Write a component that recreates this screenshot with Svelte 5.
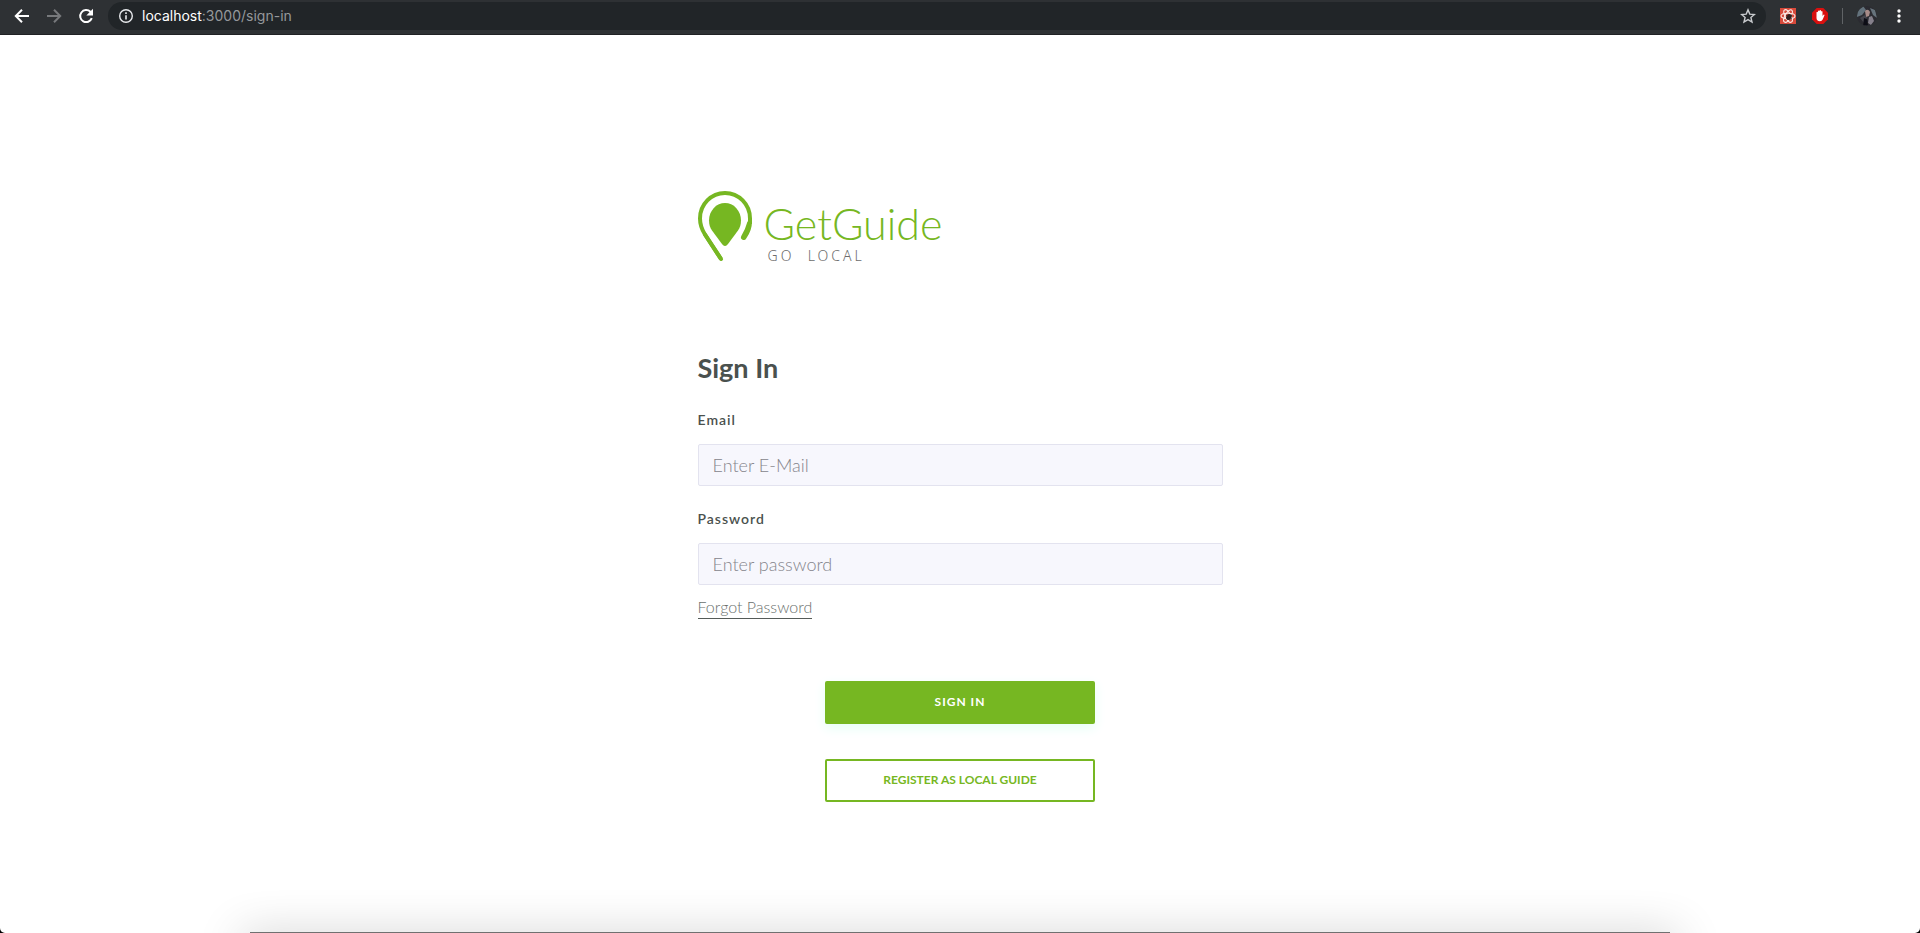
<script>
  let email = $state('');
  let password = $state('');
</script>

<div class="window">
  <header class="toolbar">
    <nav class="nav" aria-label="Browser">
      <button class="tool" aria-label="Back">
        <svg width="20" height="20" viewBox="0 0 20 20"><path d="M17 10H4M10 3.800 3.800 10l6.200 6.200" fill="none" stroke="#fff" stroke-width="2" /></svg>
      </button>
      <button class="tool" aria-label="Forward">
        <svg width="20" height="20" viewBox="0 0 20 20"><path d="M3 10h13M10 3.800l6.200 6.200-6.200 6.200" fill="none" stroke="#77797c" stroke-width="2" /></svg>
      </button>
      <button class="tool" aria-label="Reload">
        <svg width="20" height="20" viewBox="0 0 20 20"><path d="M15.800 12.200A6 6 0 1 1 14.400 5.800l1.200 1.200" fill="none" stroke="#fff" stroke-width="2" /><path d="M17 2.800v6.700h-6.700z" fill="#fff" /></svg>
      </button>
    </nav>
    <div class="address">
      <svg width="16" height="16" viewBox="0 0 16 16"><circle cx="8" cy="8" r="6.300" fill="none" stroke="#e8eaed" stroke-width="1.400" /><path d="M8 7.200v4.300M8 4.300v1.700" stroke="#e8eaed" stroke-width="1.600" /></svg>
      <span class="url"><b>localhost</b>:3000/sign-in</span>
      <button class="tool" aria-label="Bookmark">
        <svg width="16" height="16" viewBox="0 0 16 16"><path d="m8 1.900 1.800 4.200 4.600.4-3.500 3 1.100 4.500L8 11.600 4 14l1.100-4.500-3.500-3 4.600-.4z" fill="none" stroke="#c9cbce" stroke-width="1.400" /></svg>
      </button>
    </div>
    <div class="extras">
      <button class="tool" aria-label="React extension">
        <svg width="16" height="16" viewBox="0 0 16 16"><path d="M0 0h16v16H0z" fill="#d7493a" /><g fill="none" stroke="#fbe9e5" stroke-width="1.100"><ellipse cx="8" cy="8" rx="7" ry="2.800" /><ellipse cx="8" cy="8" rx="7" ry="2.800" transform="rotate(60 8 8)" /><ellipse cx="8" cy="8" rx="7" ry="2.800" transform="rotate(120 8 8)" /></g><ellipse cx="9" cy="9" rx="2.400" ry="3.200" fill="#30201f" transform="rotate(40 9 9)" /><path d="m6 7 6 4M6 10l6-3M8 6l2 6" stroke="#30201f" stroke-width=".8" /></svg>
      </button>
      <button class="tool" aria-label="Ad blocker">
        <svg width="16" height="16" viewBox="0 0 16 16"><path d="M4.700 0h6.600L16 4.700v6.600L11.300 16H4.700L0 11.300V4.700z" fill="#d9100f" /><path d="M4.500 8.500V4.200q.8-.8 1.500 0V3q.8-.9 1.500 0v-.5q.8-.8 1.500 0V3.500q.8-.8 1.500 0v4.600l1-1.400q1-.3 1 .5l-1.800 4.300q-.8 1.800-2.700 1.800C5.500 13.300 4.500 11.800 4.500 10z" fill="#fff" /></svg>
      </button>
      <span class="divider"></span>
      <button class="tool" aria-label="Profile">
        <svg width="20" height="20" viewBox="0 0 20 20"><defs><clipPath id="face"><circle cx="10" cy="10" r="10" /></clipPath><filter id="soft"><feGaussianBlur stdDeviation=".7" /></filter></defs><g clip-path="url(#face)"><path d="M0 0h20v20H0z" fill="#2b2b31" /><g filter="url(#soft)"><path d="M0 5 6 0l3 4-4 5-5 2z" fill="#63727b" /><path d="m13 2 5 2 2 8-4-3z" fill="#66737b" /><path d="M8 5q3-3 5 1l-1 4-3 1z" fill="#a78b88" /><path d="m3 12 5-3 2 3-3 5z" fill="#45454d" /><path d="m12 11 3-1 2 5-3 4-3-2z" fill="#85808b" /><path d="m7 12 3 1 1 6-5 1z" fill="#101116" /></g></g></svg>
      </button>
      <button class="tool" aria-label="Menu">
        <svg width="16" height="16" viewBox="0 0 16 16" fill="#fff"><circle cx="8" cy="3" r="1.700" /><circle cx="8" cy="8" r="1.700" /><circle cx="8" cy="13" r="1.700" /></svg>
      </button>
    </div>
  </header>

  <main>
    <div class="brand">
      <svg class="pin" width="54" height="71" viewBox="0 0 54 71">
        <path d="M23 68 7 43.500C3.500 38 2 33 2 27.500a25 25.500 0 0 1 50 0V33" fill="none" stroke="#76b722" stroke-width="4" />
        <path d="M23 68 7 43.500" fill="none" stroke="#76b722" stroke-width="4" stroke-linecap="round" />
        <path d="M49.500 30.500h4.500q0 9-5.800 17a2.600 2.600 0 0 1-4.900-2.500Q47.500 38 49.500 30.500z" fill="#76b722" />
        <path d="M27 55c-1.500 0-2.300-1-3.200-2.200L14 39.500c-2-3-3-6-3-10a16 17.500 0 0 1 32 0c0 4-1 7-3 10l-9.800 13.300C29.300 54 28.500 55 27 55z" fill="#76b722" />
      </svg>
      <div class="words">
        <span class="name">GetGuide</span>
        <span class="tagline">GO &nbsp;LOCAL</span>
      </div>
    </div>

    <form onsubmit={(e) => e.preventDefault()}>
      <h1>Sign In</h1>
      <label for="email">Email</label>
      <input id="email" type="email" placeholder="Enter E-Mail" bind:value={email} />
      <label for="password">Password</label>
      <input id="password" type="password" placeholder="Enter password" bind:value={password} />
      <a class="forgot" href="#forgot">Forgot Password</a>
      <div class="actions">
        <button class="primary" type="submit">SIGN IN</button>
        <button class="outline" type="button">REGISTER AS LOCAL GUIDE</button>
      </div>
    </form>
  </main>
  <div class="dock"></div>
</div>

<style>
  :global(body) {
    margin: 0;
    background: #000;
  }
  .window {
    position: relative;
    display: flex;
    flex-direction: column;
    min-height: 100vh;
    box-sizing: border-box;
    overflow: hidden;
    background: #fff;
    border-radius: 0 0 5px 5px;
    font-family: Lato, sans-serif;
    color: #4a514e;
  }
  button {
    font: inherit;
    cursor: pointer;
  }
  svg {
    display: block;
  }
  .toolbar {
    display: flex;
    align-items: center;
    height: 35px;
    box-sizing: border-box;
    padding: 0 13px 3px 12px;
    background: #2e3134;
    border-bottom: 1px solid #202124;
  }
  .tool {
    padding: 0;
    border: 0;
    background: none;
  }
  .nav {
    display: flex;
    gap: 12px;
    margin-right: 12px;
  }
  .address {
    flex: 1;
    display: flex;
    align-items: center;
    gap: 8px;
    height: 28px;
    box-sizing: border-box;
    padding: 0 10px;
    border-radius: 14px;
    background: #212528;
  }
  .url {
    flex: 1;
    font-family: Inter, sans-serif;
    font-size: 14px;
    line-height: 20px;
    color: #95989b;
  }
  .url b {
    font-weight: 400;
    color: #fff;
  }
  .extras {
    display: flex;
    align-items: center;
    gap: 14px;
    margin-left: 14px;
  }
  .extras .tool:first-child {
    margin-right: 2px;
  }
  .divider {
    width: 1px;
    height: 16px;
    background: #606366;
  }
  main {
    width: 100%;
    max-width: 525px;
    margin: 0 auto;
    padding: 156px 0 64px;
  }
  .brand {
    display: flex;
    gap: 12px;
  }
  .words {
    display: flex;
    flex-direction: column;
    padding-top: 9px;
  }
  .name {
    font-size: 43px;
    line-height: 48px;
    font-weight: 300;
    color: #76b722;
  }
  .tagline {
    padding-left: 4px;
    font-family: "Noto Sans", sans-serif;
    font-size: 14px;
    line-height: 16px;
    font-weight: 300;
    letter-spacing: 3px;
    color: #6c6c6c;
  }
  form {
    display: flex;
    flex-direction: column;
    align-items: flex-start;
    padding-top: 88px;
  }
  h1 {
    margin: 0 0 26px;
    font-size: 27px;
    line-height: 32px;
    font-weight: 700;
  }
  label {
    margin-bottom: 14px;
    font-size: 14px;
    line-height: 20px;
    font-weight: 600;
    letter-spacing: 1px;
  }
  input {
    width: 100%;
    height: 42px;
    box-sizing: border-box;
    margin: 0 0 23px;
    padding: 0 14px;
    border: 1px solid #e3e3ef;
    border-radius: 2px;
    background: #f7f7fd;
    font-family: Lato, sans-serif;
    font-size: 18px;
    font-weight: 300;
    color: #4a514e;
  }
  input::placeholder {
    color: #85858c;
    opacity: 1;
  }
  #password {
    margin-bottom: 11px;
  }
  .forgot {
    padding-bottom: 1px;
    border-bottom: 1px solid #555b58;
    font-size: 16px;
    line-height: 21px;
    font-weight: 300;
    color: #6a706d;
    text-decoration: none;
  }
  .actions {
    align-self: center;
    display: flex;
    flex-direction: column;
    gap: 35px;
    width: 270px;
    padding-top: 62px;
  }
  .primary,
  .outline {
    height: 43px;
    padding: 0 0 2px;
    border: 2px solid #76b722;
    border-radius: 2px;
    font-size: 12px;
    font-weight: 700;
  }
  .primary {
    background: #76b722;
    color: #fff;
    letter-spacing: 1px;
    box-shadow: 0 4px 12px #e4fff6;
  }
  .outline {
    background: #fff;
    color: #76b722;
  }
  .dock {
    position: absolute;
    left: 13%;
    right: 13%;
    bottom: 0;
    height: 1px;
    background: #707070;
    box-shadow: 0 14px 46px 8px rgba(0, 0, 0, 0.3);
  }
</style>
